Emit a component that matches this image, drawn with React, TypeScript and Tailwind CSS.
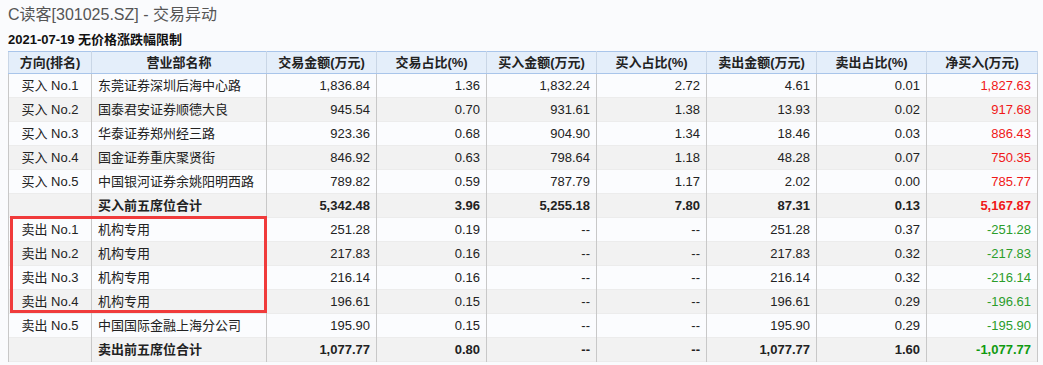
import React from 'react';

type Row = {
  dir: string;
  name: string;
  amt: string;
  amtPct: string;
  buy: string;
  buyPct: string;
  sell: string;
  sellPct: string;
  net: string;
  total?: boolean;
};

const rows: Row[] = [
  { dir: '买入 No.1', name: '东莞证券深圳后海中心路', amt: '1,836.84', amtPct: '1.36', buy: '1,832.24', buyPct: '2.72', sell: '4.61', sellPct: '0.01', net: '1,827.63' },
  { dir: '买入 No.2', name: '国泰君安证券顺德大良', amt: '945.54', amtPct: '0.70', buy: '931.61', buyPct: '1.38', sell: '13.93', sellPct: '0.02', net: '917.68' },
  { dir: '买入 No.3', name: '华泰证券郑州经三路', amt: '923.36', amtPct: '0.68', buy: '904.90', buyPct: '1.34', sell: '18.46', sellPct: '0.03', net: '886.43' },
  { dir: '买入 No.4', name: '国金证券重庆聚贤街', amt: '846.92', amtPct: '0.63', buy: '798.64', buyPct: '1.18', sell: '48.28', sellPct: '0.07', net: '750.35' },
  { dir: '买入 No.5', name: '中国银河证券余姚阳明西路', amt: '789.82', amtPct: '0.59', buy: '787.79', buyPct: '1.17', sell: '2.02', sellPct: '0.00', net: '785.77' },
  { dir: '', name: '买入前五席位合计', amt: '5,342.48', amtPct: '3.96', buy: '5,255.18', buyPct: '7.80', sell: '87.31', sellPct: '0.13', net: '5,167.87', total: true },
  { dir: '卖出 No.1', name: '机构专用', amt: '251.28', amtPct: '0.19', buy: '--', buyPct: '--', sell: '251.28', sellPct: '0.37', net: '-251.28' },
  { dir: '卖出 No.2', name: '机构专用', amt: '217.83', amtPct: '0.16', buy: '--', buyPct: '--', sell: '217.83', sellPct: '0.32', net: '-217.83' },
  { dir: '卖出 No.3', name: '机构专用', amt: '216.14', amtPct: '0.16', buy: '--', buyPct: '--', sell: '216.14', sellPct: '0.32', net: '-216.14' },
  { dir: '卖出 No.4', name: '机构专用', amt: '196.61', amtPct: '0.15', buy: '--', buyPct: '--', sell: '196.61', sellPct: '0.29', net: '-196.61' },
  { dir: '卖出 No.5', name: '中国国际金融上海分公司', amt: '195.90', amtPct: '0.15', buy: '--', buyPct: '--', sell: '195.90', sellPct: '0.29', net: '-195.90' },
  { dir: '', name: '卖出前五席位合计', amt: '1,077.77', amtPct: '0.80', buy: '--', buyPct: '--', sell: '1,077.77', sellPct: '1.60', net: '-1,077.77', total: true },
];

const headers = ['方向(排名)', '营业部名称', '交易金额(万元)', '交易占比(%)', '买入金额(万元)', '买入占比(%)', '卖出金额(万元)', '卖出占比(%)', '净买入(万元)'];
const widths = ['w-[83px]', 'w-[175px]', 'w-[110px]', 'w-[110px]', 'w-[110px]', 'w-[110px]', 'w-[110px]', 'w-[110px]', 'w-[111px]'];

const font = "font-['Liberation_Sans','Noto_Sans_CJK_SC',sans-serif]";

const App: React.FC = () => {
  return (
    <div className={`w-[1043px] h-[365px] bg-[#fafbfd] px-2 pt-[5px] ${font} overflow-hidden`}>
      <div className="text-[16px] leading-[20px] text-[#555]">C读客[301025.SZ] - 交易异动</div>
      <div className="mt-[7px] text-[13px] leading-[16px] font-bold text-[#111]">2021-07-19 无价格涨跌幅限制</div>

      <div className="relative mt-[3px] w-[1029px]">
        <table className="w-[1029px] table-fixed border-collapse border border-[#a9c5ea] text-[13px] text-[#222]">
          <colgroup>
            {widths.map((w, i) => (
              <col key={i} className={w} />
            ))}
          </colgroup>
          <thead>
            <tr className="h-[22px] bg-[#e4eefa]">
              {headers.map((h, i) => (
                <th key={i} className="border border-[#a9c5ea] border-l-[#c9d6e6] border-r-[#c9d6e6] px-1.5 font-bold text-center leading-[20px] whitespace-nowrap">
                  {h}
                </th>
              ))}
            </tr>
          </thead>
          <tbody>
            {rows.map((r, i) => {
              const bg = i % 2 === 0 ? 'bg-[#fbfcfe]' : 'bg-[#f2f2f2]';
              const b = r.total ? 'font-bold' : '';
              const netColor = r.net.startsWith('-')
                ? r.total ? 'text-[#109a10]' : 'text-[#2b9d2b]'
                : 'text-[#f01818]';
              const cell = 'border-x border-[#c8c8c8] px-1.5 whitespace-nowrap';
              return (
                <tr key={i} className={`h-[24px] ${bg} border-b border-[#ececec]`}>
                  <td className={`${cell} text-center`}>{r.dir}</td>
                  <td className={`${cell} text-left ${b}`}>{r.name}</td>
                  <td className={`${cell} text-right ${b}`}>{r.amt}</td>
                  <td className={`${cell} text-right ${b}`}>{r.amtPct}</td>
                  <td className={`${cell} text-right ${b}`}>{r.buy}</td>
                  <td className={`${cell} text-right ${b}`}>{r.buyPct}</td>
                  <td className={`${cell} text-right ${b}`}>{r.sell}</td>
                  <td className={`${cell} text-right ${b}`}>{r.sellPct}</td>
                  <td className={`${cell} text-right ${b} ${netColor}`}>{r.net}</td>
                </tr>
              );
            })}
          </tbody>
        </table>
        {/* highlight box over sell No.1 - No.4 */}
        <div className="absolute left-[2px] top-[165px] w-[257px] h-[97px] border-[3px] border-[#f03b3b] pointer-events-none" />
      </div>
    </div>
  );
};

export default App;
